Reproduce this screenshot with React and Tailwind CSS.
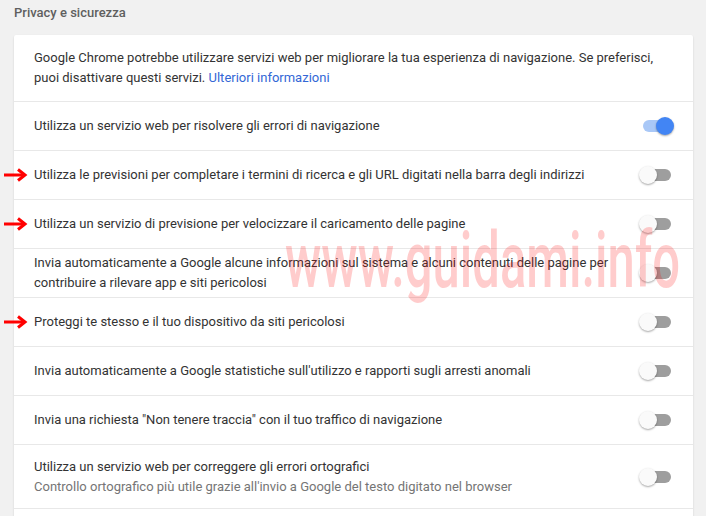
import React from 'react';

const ROWS = [
  { label: 'Utilizza un servizio web per risolvere gli errori di navigazione', on: true },
  { label: 'Utilizza le previsioni per completare i termini di ricerca e gli URL digitati nella barra degli indirizzi', arrow: true },
  { label: 'Utilizza un servizio di previsione per velocizzare il caricamento delle pagine', arrow: true },
  { label: 'Invia automaticamente a Google alcune informazioni sul sistema e alcuni contenuti delle pagine per contribuire a rilevare app e siti pericolosi', wrap: true },
  { label: 'Proteggi te stesso e il tuo dispositivo da siti pericolosi', arrow: true },
  { label: 'Invia automaticamente a Google statistiche sull\'utilizzo e rapporti sugli arresti anomali' },
  { label: 'Invia una richiesta "Non tenere traccia" con il tuo traffico di navigazione' },
];

function Toggle({ on }) {
  return (
    <div className="relative w-[35px] h-[18px] shrink-0">
      <div className={on
        ? 'absolute left-[4px] top-[3px] w-[28px] h-[12px] rounded-full bg-[#a9c8f7]'
        : 'absolute left-[4px] top-[3px] w-[28px] h-[12px] rounded-full bg-[#9e9e9e]'} />
      <div className={on
        ? 'absolute right-0 top-0 w-[18px] h-[18px] rounded-full bg-[#4285f4] shadow-[0_1px_2px_rgba(0,0,0,0.35)]'
        : 'absolute left-0 top-0 w-[18px] h-[18px] rounded-full bg-[#fafafa] shadow-[0_1px_2px_rgba(0,0,0,0.35)]'} />
    </div>
  );
}

function Arrow() {
  return (
    <svg className="absolute left-[-10px] top-1/2 -translate-y-1/2" width="24" height="14" viewBox="0 0 24 14">
      <path d="M0 7 H20" stroke="#ff0000" strokeWidth="3" fill="none" />
      <path d="M14 1.5 L21 7 L14 12.5" stroke="#ff0000" strokeWidth="3" fill="none" strokeLinejoin="miter" />
    </svg>
  );
}

export default function App() {
  return (
    <div className="relative w-[706px] h-[516px] overflow-hidden bg-[#f1f1f1] text-[13px] text-[#333]" style={{ fontFamily: 'Roboto, "Liberation Sans", sans-serif' }}>
      <div className="h-[35px] pl-[14px] pt-[3px] leading-5 font-medium text-[#5f5f5f]">Privacy e sicurezza</div>

      <div className="ml-[14px] w-[679px] bg-white rounded-[2px] shadow-[0_1px_2px_rgba(0,0,0,0.15)]">
        {/* Intro */}
        <div className="px-5 py-[13px] leading-5">
          Google Chrome potrebbe utilizzare servizi web per migliorare la tua esperienza di navigazione. Se preferisci,
          <br />
          puoi disattivare questi servizi. <span className="text-[#3367d6]">Ulteriori informazioni</span>
        </div>

        {ROWS.map((r, i) => (
          <div key={i} className="relative flex items-center justify-between min-h-[49px] border-t border-[#e8e8e8] pl-5 pr-[19px]">
            {r.arrow && <Arrow />}
            <div className={r.wrap ? 'leading-5 w-[590px]' : 'leading-5'}>{r.label}</div>
            <Toggle on={r.on} />
          </div>
        ))}

        <div className="flex items-center justify-between min-h-[64px] border-t border-[#e8e8e8] pl-5 pr-[19px]">
          <div className="leading-5">
            <div>Utilizza un servizio web per correggere gli errori ortografici</div>
            <div className="text-[#757575]">Controllo ortografico più utile grazie all'invio a Google del testo digitato nel browser</div>
          </div>
          <Toggle />
        </div>

        <div className="min-h-[48px] border-t border-[#e8e8e8]" />
      </div>

      {/* watermark */}
      <svg className="absolute left-[270px] top-[215px] pointer-events-none" width="420" height="95" viewBox="0 0 420 95">
        <text x="15" y="72" fontSize="78" fontWeight="500" fill="#ff0000" fillOpacity="0.2" textLength="395" lengthAdjust="spacingAndGlyphs" style={{ fontFamily: 'Roboto, "Liberation Sans", sans-serif' }}>www.guidami.info</text>
      </svg>
    </div>
  );
}
